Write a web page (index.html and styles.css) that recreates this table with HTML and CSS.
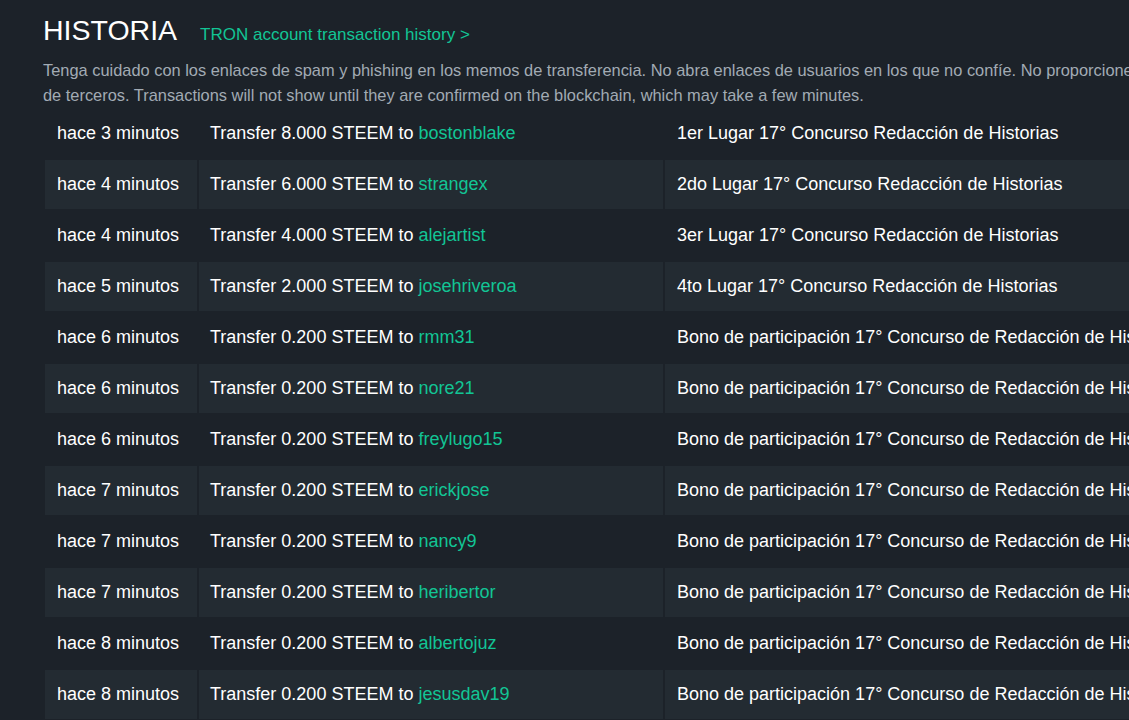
FILE: index.html
```html
<!DOCTYPE html>
<html lang="es">
<head>
<meta charset="utf-8">
<title>Historia</title>
<link rel="stylesheet" href="styles.css">
</head>
<body>
<main class="page">
  <header class="head">
    <h1 class="title">HISTORIA</h1>
    <a class="tron" href="#">TRON account transaction history &gt;</a>
  </header>
  <p class="warn">Tenga cuidado con los enlaces de spam y phishing en los memos de transferencia. No abra enlaces de usuarios en los que no confíe. No proporcione sus claves privadas a ningún sitio web de terceros. Transactions will not show until they are confirmed on the blockchain, which may take a few minutes.</p>
  <table class="tx">
    <tbody>
      <tr><td class="c-time">hace 3 minutos</td><td class="c-op">Transfer 8.000 STEEM to <a href="#">bostonblake</a></td><td class="c-memo">1er Lugar 17° Concurso Redacción de Historias</td></tr>
      <tr><td class="c-time">hace 4 minutos</td><td class="c-op">Transfer 6.000 STEEM to <a href="#">strangex</a></td><td class="c-memo">2do Lugar 17° Concurso Redacción de Historias</td></tr>
      <tr><td class="c-time">hace 4 minutos</td><td class="c-op">Transfer 4.000 STEEM to <a href="#">alejartist</a></td><td class="c-memo">3er Lugar 17° Concurso Redacción de Historias</td></tr>
      <tr><td class="c-time">hace 5 minutos</td><td class="c-op">Transfer 2.000 STEEM to <a href="#">josehriveroa</a></td><td class="c-memo">4to Lugar 17° Concurso Redacción de Historias</td></tr>
      <tr><td class="c-time">hace 6 minutos</td><td class="c-op">Transfer 0.200 STEEM to <a href="#">rmm31</a></td><td class="c-memo">Bono de participación 17° Concurso de Redacción de Historias</td></tr>
      <tr><td class="c-time">hace 6 minutos</td><td class="c-op">Transfer 0.200 STEEM to <a href="#">nore21</a></td><td class="c-memo">Bono de participación 17° Concurso de Redacción de Historias</td></tr>
      <tr><td class="c-time">hace 6 minutos</td><td class="c-op">Transfer 0.200 STEEM to <a href="#">freylugo15</a></td><td class="c-memo">Bono de participación 17° Concurso de Redacción de Historias</td></tr>
      <tr><td class="c-time">hace 7 minutos</td><td class="c-op">Transfer 0.200 STEEM to <a href="#">erickjose</a></td><td class="c-memo">Bono de participación 17° Concurso de Redacción de Historias</td></tr>
      <tr><td class="c-time">hace 7 minutos</td><td class="c-op">Transfer 0.200 STEEM to <a href="#">nancy9</a></td><td class="c-memo">Bono de participación 17° Concurso de Redacción de Historias</td></tr>
      <tr><td class="c-time">hace 7 minutos</td><td class="c-op">Transfer 0.200 STEEM to <a href="#">heribertor</a></td><td class="c-memo">Bono de participación 17° Concurso de Redacción de Historias</td></tr>
      <tr><td class="c-time">hace 8 minutos</td><td class="c-op">Transfer 0.200 STEEM to <a href="#">albertojuz</a></td><td class="c-memo">Bono de participación 17° Concurso de Redacción de Historias</td></tr>
      <tr><td class="c-time">hace 8 minutos</td><td class="c-op">Transfer 0.200 STEEM to <a href="#">jesusdav19</a></td><td class="c-memo">Bono de participación 17° Concurso de Redacción de Historias</td></tr>
    </tbody>
  </table>
</main>
</body>
</html>
```

FILE: styles.css
```css
html, body {
  margin: 0;
  padding: 0;
  background: #1c2229;
  overflow: hidden;
  height: 720px;
}
body {
  font-family: "Liberation Sans", Arial, sans-serif;
  color: #ffffff;
}
.page {
  width: 1440px;
  padding: 13px 0 0 43px;
}
.head {
  display: flex;
  align-items: baseline;
  gap: 23px;
  height: 38px;
}
.title {
  margin: 0;
  font-size: 28.5px;
  font-weight: 400;
  line-height: 34px;
  color: #ffffff;
}
.tron {
  font-size: 17px;
  color: #12c595;
  text-decoration: none;
}
.warn {
  width: 1375px;
  margin: 7px 0 0;
  font-size: 16.4px;
  line-height: 25px;
  color: #a2abb4;
}
.tx {
  margin-top: -1px;
  border-collapse: separate;
  border-spacing: 2px;
  table-layout: fixed;
  font-size: 18px;
  white-space: nowrap;
}
.tx td {
  height: 49px;
  padding: 0 12px;
  box-sizing: border-box;
  vertical-align: middle;
}
.tx tr:nth-child(even) td {
  background: #232b32;
}
.c-time { width: 152px; }
.c-op { width: 464px; padding-left: 11px !important; }
.c-memo { width: 560px; }
.tx a {
  color: #12c595;
  text-decoration: none;
}
```
